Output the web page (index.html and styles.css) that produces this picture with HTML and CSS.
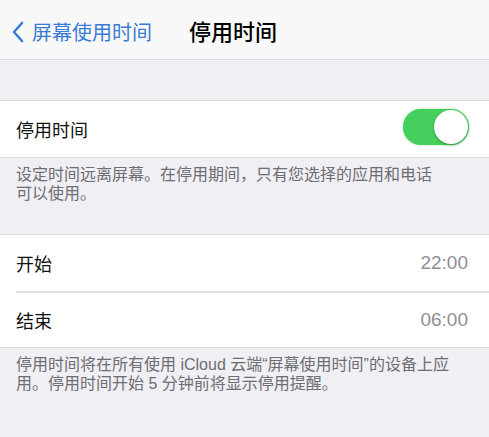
FILE: index.html
```html
<!DOCTYPE html>
<html lang="zh-CN">
<head>
    <meta charset="UTF-8">
    <meta name="viewport" content="width=device-width, initial-scale=1.0">
    <title>停用时间</title>
    <link rel="stylesheet" href="styles.css">
</head>
<body>
    <div class="navbar">
        <div class="back">
            <svg class="chevron" width="14" height="24" viewBox="0 0 14 24">
                <path d="M11 3 L3 12 L11 21" fill="none" stroke="#3a7bd5" stroke-width="2.6" stroke-linecap="round" stroke-linejoin="round"/>
            </svg>
            <span>屏幕使用时间</span>
        </div>
        <div class="title">停用时间</div>
    </div>

    <div class="spacer"></div>

    <div class="group">
        <div class="row">
            <span class="label">停用时间</span>
            <div class="toggle on"><div class="knob"></div></div>
        </div>
    </div>
    <div class="footer first">设定时间远离屏幕。在停用期间，只有您选择的应用和电话<br>可以使用。</div>

    <div class="group">
        <div class="row">
            <span class="label">开始</span>
            <span class="value">22:00</span>
        </div>
        <div class="row">
            <span class="label">结束</span>
            <span class="value">06:00</span>
        </div>
    </div>
    <div class="footer">停用时间将在所有使用 iCloud 云端“屏幕使用时间”的设备上应<br>用。停用时间开始 5 分钟前将显示停用提醒。</div>
</body>
</html>
```

FILE: styles.css
```css
body {
    margin: 0;
    background-color: #efeff4;
    font-family: "Liberation Sans", "Noto Sans CJK SC", sans-serif;
    color: #111;
}

.navbar {
    height: 59px;
    display: flex;
    align-items: center;
    background-color: #f8f8f8;
    border-bottom: 1px solid #dcdcdc;
}

.back {
    display: flex;
    align-items: center;
    gap: 7px;
    padding-left: 11px;
    margin-top: 4px;
    color: #3a7bd5;
    font-size: 20px;
}

.title {
    margin-left: 37px;
    font-size: 22px;
    font-weight: 500;
    color: #000;
}

.spacer {
    height: 40px;
}

.group {
    background-color: #fff;
    border-top: 1px solid #dcdcdc;
    border-bottom: 1px solid #dcdcdc;
}

.row {
    height: 56px;
    display: flex;
    align-items: center;
    justify-content: space-between;
    margin-left: 16px;
    padding-right: 21px;
}

.row + .row {
    border-top: 2px solid #e4e4e6;
    height: 54px;
}

.label {
    font-size: 18px;
}

.value {
    font-size: 19px;
    color: #8e8e93;
}

.toggle {
    width: 66px;
    height: 36px;
    border-radius: 18px;
    background-color: #45d05e;
    display: flex;
    align-items: center;
    justify-content: flex-end;
    margin-right: -1px;
    margin-bottom: 4px;
    box-shadow: 0 0 2px rgba(60, 170, 80, 0.6);
}

.knob {
    width: 34px;
    height: 34px;
    border-radius: 50%;
    background-color: #fff;
    margin-right: 1px;
    box-shadow: 0 1px 3px rgba(0, 0, 0, 0.3);
}

.footer {
    padding: 7px 16px 0;
    font-size: 16px;
    line-height: 19px;
    color: #6d6d72;
    height: 70px;
}

.footer.first {
    height: 69px;
}
```
